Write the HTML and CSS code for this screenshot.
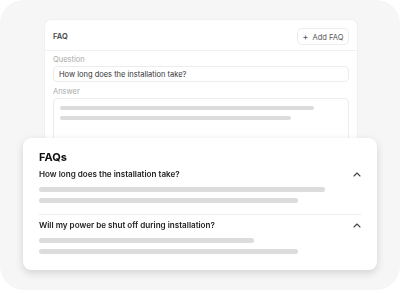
FILE: index.html
```html
<!DOCTYPE html>
<html lang="en">
<head>
  <meta charset="UTF-8">
  <title>FAQ editor</title>
  <link rel="stylesheet" href="styles.css">
</head>
<body>
  <div class="frame">
    <!-- Editor card sitting behind -->
    <div class="editor">
      <div class="editor-head">
        <span class="editor-title">FAQ</span>
        <button class="add-btn"><span class="plus">+</span> Add FAQ</button>
      </div>
      <div class="editor-body">
        <div class="label">Question</div>
        <div class="input">How long does the installation take?</div>
        <div class="label">Answer</div>
        <div class="textarea">
          <div class="bar" style="width: 254px"></div>
          <div class="bar" style="width: 231px"></div>
        </div>
      </div>
    </div>

    <!-- Preview card in front -->
    <div class="preview">
      <h2>FAQs</h2>
      <div class="item">
        <div class="question">
          <span>How long does the installation take?</span>
          <svg class="chev" width="8" height="5" viewBox="0 0 8 5"><path d="M1 4 L4 1 L7 4" fill="none" stroke="#444" stroke-width="1.1" stroke-linecap="round" stroke-linejoin="round"/></svg>
        </div>
        <div class="bar" style="width: 286px"></div>
        <div class="bar" style="width: 259px"></div>
      </div>
      <div class="item">
        <div class="question">
          <span>Will my power be shut off during installation?</span>
          <svg class="chev" width="8" height="5" viewBox="0 0 8 5"><path d="M1 4 L4 1 L7 4" fill="none" stroke="#444" stroke-width="1.1" stroke-linecap="round" stroke-linejoin="round"/></svg>
        </div>
        <div class="bar" style="width: 215px"></div>
        <div class="bar" style="width: 259px"></div>
      </div>
    </div>
  </div>
</body>
</html>
```

FILE: styles.css
```css
body {
  margin: 0;
  background: #fff;
  font-family: 'Inter', 'Noto Sans', sans-serif;
  color: #2a2a2a;
}
/* Light grey rounded canvas */
.frame {
  width: 400px;
  height: 290px;
  background: #f6f6f6;
  border-radius: 24px;
  padding-top: 20px;
  box-sizing: border-box;
  overflow: hidden;
  filter: blur(0.35px);
}
/* Back card: FAQ editor */
.editor {
  margin-left: 45px;
  width: 312px;
  height: 130px;
  background: #fff;
  border-radius: 6px;
  box-shadow: 0 0 0 1px #f0f0f0;
  overflow: hidden;
}
.editor-head {
  display: flex;
  align-items: center;
  justify-content: space-between;
  height: 28px;
  padding: 2px 8px 0;
  border-bottom: 1px solid #f1f1f1;
}
.editor-title {
  font-size: 7.5px;
  font-weight: 600;
  color: #444;
}
.add-btn {
  font-family: inherit;
  font-size: 7.5px;
  color: #555;
  background: #fff;
  border: 1px solid #ececec;
  border-radius: 5px;
  height: 17px;
  width: 52px;
  padding: 0;
}
.add-btn .plus {
  font-size: 9px;
  margin-right: 2px;
}
.editor-body {
  padding: 3px 8px 0;
}
.label {
  font-size: 7.5px;
  color: #aaa;
  line-height: 12px;
}
.input {
  height: 16px;
  box-sizing: border-box;
  border: 1px solid #ececec;
  border-radius: 4px;
  font-size: 7.5px;
  color: #333;
  padding-left: 5px;
  display: flex;
  align-items: center;
  margin-bottom: 4px;
}
.textarea {
  height: 60px;
  border: 1px solid #ececec;
  border-radius: 4px;
  padding: 7px 6px;
  display: flex;
  flex-direction: column;
  gap: 6px;
}
.textarea .bar {
  height: 4px;
}
.bar {
  height: 5px;
  border-radius: 3px;
  background: #dcdcdc;
}
/* Front card: FAQ preview */
.preview {
  position: relative;
  margin: -12px 0 0 23px;
  width: 354px;
  background: #fff;
  border-radius: 8px;
  box-shadow: 0 3px 8px rgba(0, 0, 0, 0.14), 0 0 1px rgba(0, 0, 0, 0.08);
  padding: 11px 16px 16px;
  box-sizing: border-box;
}
.preview h2 {
  margin: 0;
  font-size: 11px;
  font-weight: 700;
  color: #111;
  line-height: 16px;
}
.item + .item {
  border-top: 1px solid #eeeeee;
  margin-top: 11px;
  padding-top: 1px;
}
.question {
  display: flex;
  align-items: center;
  justify-content: space-between;
  font-size: 8.1px;
  font-weight: 600;
  color: #222;
  height: 18px;
  margin-bottom: 4px;
}
.chev {
  margin-right: 0;
}
.item .bar + .bar {
  margin-top: 6px;
}
```
